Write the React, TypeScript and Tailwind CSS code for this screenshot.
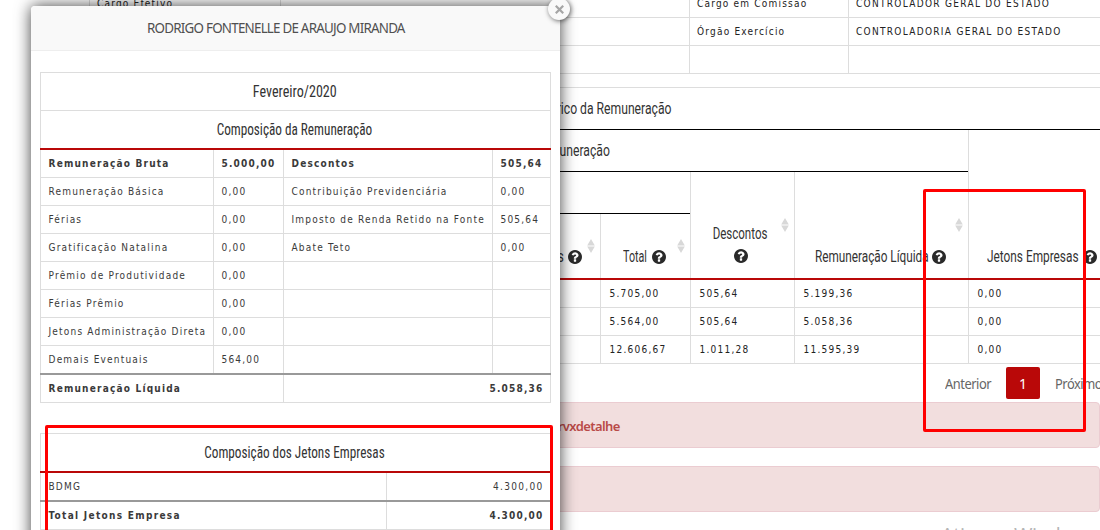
import type { ReactNode } from "react";

const body = "font-['DejaVu_Sans_Condensed','DejaVu_Sans',sans-serif] [font-stretch:condensed] text-[10px] whitespace-nowrap";
const cell = "flex items-center border-r border-[#ddd]";

function Heading({ children, className = "" }: { children: ReactNode; className?: string }) {
  return (
    <span className={`inline-block whitespace-nowrap font-['Roboto',sans-serif] text-[16px] leading-[22px] text-[#333] ${className}`}>
      {children}
    </span>
  );
}

function Sort({ className }: { className: string }) {
  return (
    <svg className={`absolute h-[14px] w-[8px] ${className}`} viewBox="0 0 8 14" fill="#d8d8d8">
      <path d="M4 0 7.8 6.5H.2zM4 14 .2 7.5h7.6z" />
    </svg>
  );
}

function Help() {
  return (
    <svg className="size-[14px] shrink-0" viewBox="128 128 1536 1536" fill="#2a2a2a">
      <path d="M1024 1376v-192q0-14-9-23t-23-9h-192q-14 0-23 9t-9 23v192q0 14 9 23t23 9h192q14 0 23-9t9-23zm256-672q0-88-55.5-163t-138.5-116-170-41q-243 0-371 213-15 24 8 42l132 100q7 6 19 6 16 0 25-12 53-68 86-92 34-24 86-24 48 0 85.5 26t37.5 59q0 38-20 61t-68 45q-63 28-115.5 86.5t-52.5 125.5v36q0 14 9 23t23 9h192q14 0 23-9t9-23q0-19 21.5-49.5t54.5-49.5q32-18 49-28.5t46-35 44.500-48 28-60.500 12.500-81zm384 192q0 209-103 385.500t-279.500 279.500-385.500 103-385.500-103-279.500-279.500-103-385.500 103-385.500 279.500-279.500 385.500-103 385.500 103 279.500 279.500 103 385.500z" />
    </svg>
  );
}

function PageTables() {
  const rows = [
    ["5.705,00", "505,64", "5.199,36", "0,00"],
    ["5.564,00", "505,64", "5.058,36", "0,00"],
    ["12.606,67", "1.011,28", "11.595,39", "0,00"],
  ];
  const top = [
    ["Cargo Efetivo", "Cargo em Comissão", "CONTROLADOR GERAL DO ESTADO"],
    ["", "Órgão Exercício", "CONTROLADORIA GERAL DO ESTADO"],
    ["", "", ""],
  ];
  return (
    <div className="ml-[89px] w-[1011px]">
      <div className="-mt-[10px] border-l border-[#ddd]">
        {top.map((r, i) => (
          <div key={i} className={`grid h-[28px] grid-cols-[191px_409px_159px_1fr] border-b border-[#ddd] tracking-[1.2px] text-[#222] ${body}`}>
            <div className={`${cell} pl-[7px]`}>{r[0]}</div>
            <div className={cell} />
            <div className={`${cell} pl-[7px]`}>{r[1]}</div>
            <div className="flex items-center pl-[7px] tracking-[1.3px]">{r[2]}</div>
          </div>
        ))}
      </div>

      <div className="mt-[13px] border-t border-[#ddd]">
        <div className="flex h-[42px] items-center border-b border-black pl-[439px]">
          <Heading className="origin-left scale-x-[0.76]">Histórico da Remuneração</Heading>
        </div>
        <div className="flex h-[148px]">
          <div className="flex w-[880px] flex-col border-r border-[#ddd]">
            <div className="flex h-[42px] items-center border-b border-black pl-[446px]">
              <Heading className="origin-left scale-x-[0.76]">Remuneração</Heading>
            </div>
            <div className="flex h-[106px]">
              <div className="flex w-[602px] flex-col border-r border-[#ddd]">
                <div className="h-[42px] border-b border-black" />
                <div className="flex h-[64px]">
                  <div className="relative flex w-[512px] items-end justify-end gap-[4px] border-r border-[#ddd] pb-[14px] pr-[18px]">
                    <Heading className="-mb-[4px] origin-right scale-x-[0.76]">Eventuais</Heading>
                    <Help />
                    <Sort className="right-[5px] top-[25px]" />
                  </div>
                  <div className="relative flex flex-1 items-end pb-[14px] pl-[21.5px]">
                    <Heading className="-mb-[4px] w-[29px] origin-left scale-x-[0.67]">Total</Heading>
                    <Help />
                    <Sort className="right-[5px] top-[25px]" />
                  </div>
                </div>
              </div>
              <div className="relative flex w-[104px] flex-col items-center border-r border-[#ddd] pr-[4px] pt-[51px]">
                <Heading className="mb-[4px] origin-center scale-x-[0.72]">Descontos</Heading>
                <div className="pl-[1px]">
                  <Help />
                </div>
                <Sort className="right-[5px] top-[46px]" />
              </div>
              <div className="relative flex flex-1 items-end pb-[14px] pl-[19.5px]">
                <Heading className="-mb-[4px] w-[117px] origin-left scale-x-[0.735]">Remuneração Líquida</Heading>
                <Help />
                <Sort className="right-[5px] top-[46px]" />
              </div>
            </div>
          </div>
          <div className="flex flex-1 items-end pb-[14px] pl-[18px]">
            <Heading className="-mb-[4px] w-[96px] origin-left scale-x-[0.74]">Jetons Empresas</Heading>
            <Help />
          </div>
        </div>
        <div className="h-[2px] bg-[#b90808]" />
        {rows.map((r) => (
          <div key={r[0]} className={`grid h-[28px] grid-cols-[512px_90px_104px_174px_1fr] border-b border-[#ddd] tracking-[1.25px] text-[#222] ${body}`}>
            <div className={cell} />
            <div className={`${cell} pl-[8.5px]`}>{r[0]}</div>
            <div className={`${cell} pl-[8.5px]`}>{r[1]}</div>
            <div className={`${cell} pl-[8.5px]`}>{r[2]}</div>
            <div className="flex items-center pl-[8.5px]">{r[3]}</div>
          </div>
        ))}
      </div>

      <div className="mt-[3px] flex h-[32px] items-center whitespace-nowrap pl-[856px] font-['Noto_Sans',sans-serif] text-[14px] text-[#666]">
        <span className="w-[61px] shrink-0">
          <span className="inline-block origin-left scale-x-[0.92] tracking-[-0.5px]">Anterior</span>
        </span>
        <span className="flex h-full w-[34px] shrink-0 items-center justify-center rounded-[2px] bg-[#b90808] text-white">1</span>
        <span className="ml-[15px] origin-left scale-x-[0.92] tracking-[-0.5px]">Próximo</span>
      </div>
      <div className="mt-[3px] flex h-[46px] items-center rounded-[4px] border border-[#ebccd1] bg-[#f2dede] pl-[455px] pt-[4px] font-['Noto_Sans',sans-serif] text-[13px] font-semibold tracking-[-0.6px] text-[#b94a48]">
        servxdetalhe
      </div>
      <div className="mt-[18px] h-[46px] rounded-[4px] border border-[#ebccd1] bg-[#f2dede]" />
      <div className="mt-[9px] pl-[852px] font-['Open_Sans',sans-serif] text-[20px] leading-[27px] tracking-[-0.4px] text-[#b5b5b5]">Ativar o Windows</div>
    </div>
  );
}

function Modal() {
  const rows = [
    ["Remuneração Bruta", "5.000,00", "Descontos", "505,64"],
    ["Remuneração Básica", "0,00", "Contribuição Previdenciária", "0,00"],
    ["Férias", "0,00", "Imposto de Renda Retido na Fonte", "505,64"],
    ["Gratificação Natalina", "0,00", "Abate Teto", "0,00"],
    ["Prêmio de Produtividade", "0,00", "", ""],
    ["Férias Prêmio", "0,00", "", ""],
    ["Jetons Administração Direta", "0,00", "", ""],
    ["Demais Eventuais", "564,00", "", ""],
  ];
  return (
    <div className="absolute left-[31px] top-[6px] h-[560px] w-[529px] rounded-t-[4px] bg-white shadow-[0_0_16px_rgba(0,0,0,0.75)]">
      <div className="flex h-[45px] items-center justify-center rounded-t-[4px] border-b border-[#eee] bg-[#f9f9f9] pb-[2px] pr-[40px] font-['Noto_Sans',sans-serif] text-[14px] text-[#505050]">
        <span className="scale-x-[0.955] whitespace-nowrap tracking-[-0.8px]">RODRIGO FONTENELLE DE ARAUJO MIRANDA</span>
      </div>
      <div className="absolute -right-[10px] -top-[8px] flex size-[22px] items-center justify-center rounded-full bg-[#f9f9f9] shadow-[1px_1px_5px_rgba(0,0,0,0.6)]">
        <svg className="size-[9px]" viewBox="0 0 8 8" stroke="#a5a5a5" strokeWidth="2">
          <path d="m.7.7 6.6 6.6M7.3.7.7 7.3" />
        </svg>
      </div>
      <div className={`ml-[9px] mt-[21px] w-[511px] tracking-[1.2px] text-[#3a3a3a] ${body}`}>
        <div className="border-x border-t border-[#ddd] tracking-normal">
          <div className="flex h-[38px] items-center justify-center border-b border-[#ddd]">
            <Heading className="scale-x-[0.88] pr-[2px]">Fevereiro/2020</Heading>
          </div>
          <div className="flex h-[37px] items-center justify-center">
            <Heading className="scale-x-[0.825] pr-[2px]">Composição da Remuneração</Heading>
          </div>
        </div>
        <div className="h-[2px] bg-[#b90808]" />
        <div className="border-x border-[#ddd]">
          {rows.map((r, i) => (
            <div
              key={r[0]}
              className={`grid grid-cols-[173px_70px_209px_1fr] ${i === 0 ? "font-bold" : ""} ${i === 7 ? "h-[27px]" : "h-[28px] border-b border-[#ddd]"}`}
            >
              <div className={`${cell} pl-[7.5px]`}>{r[0]}</div>
              <div className={`${cell} pl-[7.5px]`}>{r[1]}</div>
              <div className={`${cell} pl-[7.5px]`}>{r[2]}</div>
              <div className="flex items-center pl-[7.5px]">{r[3]}</div>
            </div>
          ))}
        </div>
        <div className="h-[2px] bg-[#999]" />
        <div className="flex h-[28px] border-x border-b border-[#ddd] font-bold">
          <div className={`${cell} w-[243px] pl-[7.5px]`}>Remuneração Líquida</div>
          <div className="flex flex-1 items-center justify-end pr-[6.5px]">5.058,36</div>
        </div>
        <div className="mt-[30px] flex h-[38px] items-center justify-center border-x border-t border-[#ddd] tracking-normal">
          <Heading className="scale-x-[0.825] pr-[2px]">Composição dos Jetons Empresas</Heading>
        </div>
        <div className="h-[2px] bg-[#b90808]" />
        <div className="flex h-[27px] border-x border-[#ddd]">
          <div className={`${cell} w-[346px] pl-[7.5px]`}>BDMG</div>
          <div className="flex flex-1 items-center justify-end pr-[6.5px] tracking-[1.3px]">4.300,00</div>
        </div>
        <div className="h-[2px] bg-[#999]" />
        <div className="flex h-[28px] border-x border-b border-[#ddd] font-bold">
          <div className={`${cell} w-[346px] pl-[7.5px] tracking-[1.3px]`}>Total Jetons Empresa</div>
          <div className="flex flex-1 items-center justify-end pr-[6.5px]">4.300,00</div>
        </div>
      </div>
    </div>
  );
}

export default function App() {
  return (
    <div className="relative flow-root h-[530px] w-[1100px] overflow-hidden bg-white">
      <PageTables />
      <Modal />
      <div className="absolute left-[45px] top-[425px] h-[120px] w-[508px] rounded-[2px] border-3 border-[#f00]" />
      <div className="absolute left-[923px] top-[189px] h-[243px] w-[163px] rounded-[2px] border-3 border-[#f00]" />
    </div>
  );
}
